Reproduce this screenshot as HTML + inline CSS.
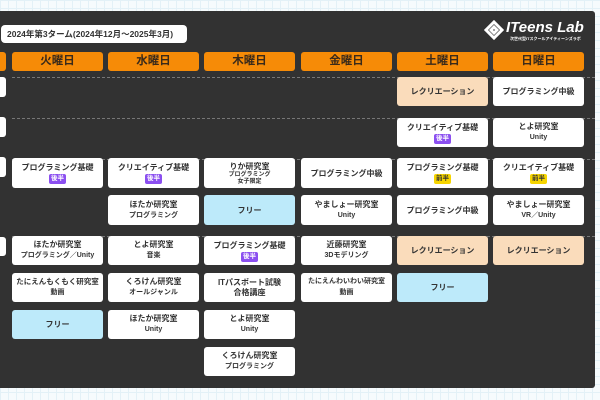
<!DOCTYPE html>
<html><head><meta charset="utf-8"><style>
*{margin:0;padding:0;box-sizing:border-box}
html,body{width:600px;height:400px;overflow:hidden}
body{position:relative;font-family:"Liberation Sans","Noto Sans CJK JP",sans-serif;font-weight:bold;
background-color:#f6fbfd;background-image:linear-gradient(#e3f1f7 1px,transparent 1px),linear-gradient(90deg,#e3f1f7 1px,transparent 1px);background-size:8px 8px}
.panel{position:absolute;left:0;top:11px;width:595px;height:377px;background:#323232;border-radius:0 3px 3px 0}
.a{position:absolute}
.title{left:1px;top:25px;width:186px;height:18px;background:#fff;border-radius:4px;font-size:8.5px;color:#333;line-height:18px;padding-left:6px;white-space:nowrap;overflow:hidden}
.hd{position:absolute;top:52px;height:19px;width:91px;background:#f68b07;border-radius:3px;color:#3a2a1a;font-size:11.5px;text-align:center;line-height:19px}
.dl{position:absolute;left:12px;width:583px;border-top:1px dashed #777}
.c{position:absolute;width:91px;background:#fff;border-radius:3px;color:#333;text-align:center;display:flex;flex-direction:column;justify-content:center;align-items:center;font-size:8px;line-height:11px;white-space:nowrap;overflow:hidden}
.c small{font-size:7px;line-height:12px}
.c i{font-style:normal;font-size:6px;line-height:6.5px}
.r{background:#fadcbb}.f{background:#bdeafa}
.b{display:inline-block;background:#8b4ff0;color:#fff;font-size:6.5px;line-height:10px;padding:0 2px;border-radius:2px;margin-top:1px}
.y{background:#f6d500;color:#333}
.lb{position:absolute;left:0;width:6px;background:#fff;border-radius:0 3px 3px 0}
</style></head><body>
<div class="panel"></div>
<div class="a title">2024年第3ターム(2024年12月～2025年3月)</div>
<div class="a" style="left:484px;top:19px;width:100px;height:24px;color:#fff;overflow:hidden">
<svg class="a" style="left:0;top:1px" width="20" height="20" viewBox="0 0 20 20"><path d="M10 2 L18 10 L10 18 L2 10 Z M10 7 L13 10 L10 13 L7 10 Z" fill="none" stroke="#fff" stroke-width="3"/></svg>
<div class="a" style="left:22px;top:0;font-size:15px;font-style:italic;line-height:17px;white-space:nowrap">ITeens Lab</div>
<div class="a" style="left:26px;top:17px;font-size:4px;white-space:nowrap">次世代型ITスクールアイティーンズラボ</div>
</div>
<div class="hd" style="left:0;width:6px;border-radius:0 3px 3px 0"></div>
<div class="hd" style="left:12px">火曜日</div><div class="hd" style="left:108px">水曜日</div><div class="hd" style="left:204px">木曜日</div>
<div class="hd" style="left:301px">金曜日</div><div class="hd" style="left:397px">土曜日</div><div class="hd" style="left:493px">日曜日</div>
<div class="dl" style="top:77px"></div><div class="dl" style="top:118px"></div><div class="dl" style="top:159px"></div><div class="dl" style="top:236px"></div>
<div class="lb" style="top:77px;height:20px"></div><div class="lb" style="top:117px;height:20px"></div><div class="lb" style="top:157px;height:20px"></div><div class="lb" style="top:237px;height:19px"></div>

<div class="c r" style="left:397px;top:77px;height:29px">レクリエーション</div>
<div class="c" style="left:493px;top:77px;height:29px">プログラミング中級</div>
<div class="c" style="left:397px;top:118px;height:29px">クリエイティブ基礎<span class="b">後半</span></div>
<div class="c" style="left:493px;top:118px;height:29px">とよ研究室<small>Unity</small></div>

<div class="c" style="left:12px;top:158px;height:30px">プログラミング基礎<span class="b">後半</span></div>
<div class="c" style="left:108px;top:158px;height:30px">クリエイティブ基礎<span class="b">後半</span></div>
<div class="c" style="left:204px;top:158px;height:30px">りか研究室<i>プログラミング<br>女子限定</i></div>
<div class="c" style="left:301px;top:158px;height:30px">プログラミング中級</div>
<div class="c" style="left:397px;top:158px;height:30px">プログラミング基礎<span class="b y">前半</span></div>
<div class="c" style="left:493px;top:158px;height:30px">クリエイティブ基礎<span class="b y">前半</span></div>
<div class="c" style="left:108px;top:195px;height:30px">ほたか研究室<small>プログラミング</small></div>
<div class="c f" style="left:204px;top:195px;height:30px">フリー</div>
<div class="c" style="left:301px;top:195px;height:30px">やましょー研究室<small>Unity</small></div>
<div class="c" style="left:397px;top:195px;height:30px">プログラミング中級</div>
<div class="c" style="left:493px;top:195px;height:30px">やましょー研究室<small>VR／Unity</small></div>

<div class="c" style="left:12px;top:236px;height:29px">ほたか研究室<small>プログラミング／Unity</small></div>
<div class="c" style="left:108px;top:236px;height:29px">とよ研究室<small>音楽</small></div>
<div class="c" style="left:204px;top:236px;height:29px">プログラミング基礎<span class="b">後半</span></div>
<div class="c" style="left:301px;top:236px;height:29px">近藤研究室<small>3Dモデリング</small></div>
<div class="c r" style="left:397px;top:236px;height:29px">レクリエーション</div>
<div class="c r" style="left:493px;top:236px;height:29px">レクリエーション</div>
<div class="c" style="left:12px;top:273px;height:29px;font-size:7.5px">たにえんもくもく研究室<small>動画</small></div>
<div class="c" style="left:108px;top:273px;height:29px">くろけん研究室<small>オールジャンル</small></div>
<div class="c" style="left:204px;top:273px;height:29px;line-height:10px">ITパスポート試験<br>合格講座</div>
<div class="c" style="left:301px;top:273px;height:29px;font-size:7px">たにえんわいわい研究室<small>動画</small></div>
<div class="c f" style="left:397px;top:273px;height:29px">フリー</div>
<div class="c f" style="left:12px;top:310px;height:29px">フリー</div>
<div class="c" style="left:108px;top:310px;height:29px">ほたか研究室<small>Unity</small></div>
<div class="c" style="left:204px;top:310px;height:29px">とよ研究室<small>Unity</small></div>
<div class="c" style="left:204px;top:347px;height:29px">くろけん研究室<small>プログラミング</small></div>
</body></html>
